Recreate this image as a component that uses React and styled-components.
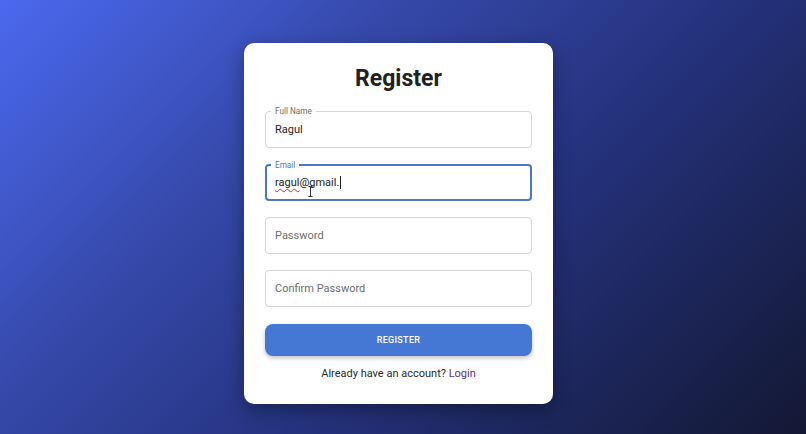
import React from "react";
import styled, { createGlobalStyle } from "styled-components";

const GlobalStyle = createGlobalStyle`
  html, body, #root { margin: 0; padding: 0; height: 100%; }
  body { font-family: Roboto, "Liberation Sans", Arial, sans-serif; }
  * { box-sizing: border-box; }
`;

const Page = styled.div`
  width: 806px;
  height: 434px;
  display: flex;
  justify-content: center;
  align-items: flex-start;
  padding-top: 43px;
  padding-right: 9px;
  background: linear-gradient(135deg, #4b69ef 0%, #3548a8 33%, #25337f 58%, #131833 100%);
  overflow: hidden;
`;

const Card = styled.form`
  width: 309px;
  height: 361px;
  background: #ffffff;
  border-radius: 10px;
  box-shadow: 0 6px 18px rgba(0, 0, 0, 0.35);
  padding: 22px 21px 0 21px;
  display: flex;
  flex-direction: column;
`;

const Title = styled.h1`
  margin: 0 0 18px;
  font-size: 23px;
  line-height: 28px;
  font-weight: 700;
  color: #212121;
  text-align: center;
`;

const Fields = styled.div`
  display: flex;
  flex-direction: column;
  gap: 16px;
`;

const Field = styled.div`
  position: relative;
  height: 37px;
  border-radius: 4px;
  border: ${(p) => (p.$focused ? "2px solid #4a78c9" : "1px solid #d6d6d6")};
  display: flex;
  align-items: center;
  padding-left: ${(p) => (p.$focused ? "8px" : "9px")};
`;

const FloatLabel = styled.span`
  position: absolute;
  top: -6px;
  left: ${(p) => (p.$focused ? "4px" : "5px")};
  padding: 0 4px;
  background: #ffffff;
  font-size: 8.2px;
  line-height: 10px;
  color: ${(p) => (p.$focused ? "#4a78c9" : "#6b6b6b")};
`;

const Value = styled.span`
  font-size: 11px;
  color: #222222;
  display: inline-flex;
  align-items: center;
`;

const Misspelled = styled.span`
  text-decoration: underline wavy #d9322c;
  text-decoration-thickness: 1px;
  text-underline-offset: 2px;
`;

const Caret = styled.span`
  display: inline-block;
  width: 1px;
  height: 13px;
  margin-left: 1px;
  background: #222222;
`;

const Placeholder = styled.span`
  font-size: 11px;
  color: #6e6e6e;
`;

const Pointer = styled.svg`
  position: absolute;
  left: 41px;
  top: 20px;
`;

const Button = styled.button`
  margin-top: 17px;
  height: 32px;
  border: none;
  border-radius: 8px;
  background: #4578d5;
  color: #ffffff;
  font-family: inherit;
  font-size: 9px;
  font-weight: 500;
  letter-spacing: 0.3px;
  box-shadow: 0 2px 4px rgba(0, 0, 0, 0.25);
`;

const Footer = styled.p`
  margin: 10px 0 0;
  text-align: center;
  font-size: 11px;
  line-height: 16px;
  color: #2a2a2a;
`;

const LoginLink = styled.a`
  color: #5b2d94;
  text-decoration: none;
`;

const TextField = ({ label, focused, children }) => (
  <Field $focused={focused}>
    {label && <FloatLabel $focused={focused}>{label}</FloatLabel>}
    {children}
  </Field>
);

export default function App() {
  return (
    <>
      <GlobalStyle />
      <Page>
        <Card onSubmit={(e) => e.preventDefault()}>
          <Title>Register</Title>
          <Fields>
            <TextField label="Full Name">
              <Value>Ragul</Value>
            </TextField>
            <TextField label="Email" focused>
              <Value>
                <Misspelled>ragul</Misspelled>@gmail.
                <Caret />
              </Value>
              <Pointer width="5" height="11" viewBox="0 0 5 11">
                <path d="M0.5 0.5h4M2.5 0.5v10M0.5 10.5h4" stroke="#333" strokeWidth="1" fill="none" />
              </Pointer>
            </TextField>
            <TextField>
              <Placeholder>Password</Placeholder>
            </TextField>
            <TextField>
              <Placeholder>Confirm Password</Placeholder>
            </TextField>
          </Fields>
          <Button type="submit">REGISTER</Button>
          <Footer>
            Already have an account? <LoginLink href="#">Login</LoginLink>
          </Footer>
        </Card>
      </Page>
    </>
  );
}
